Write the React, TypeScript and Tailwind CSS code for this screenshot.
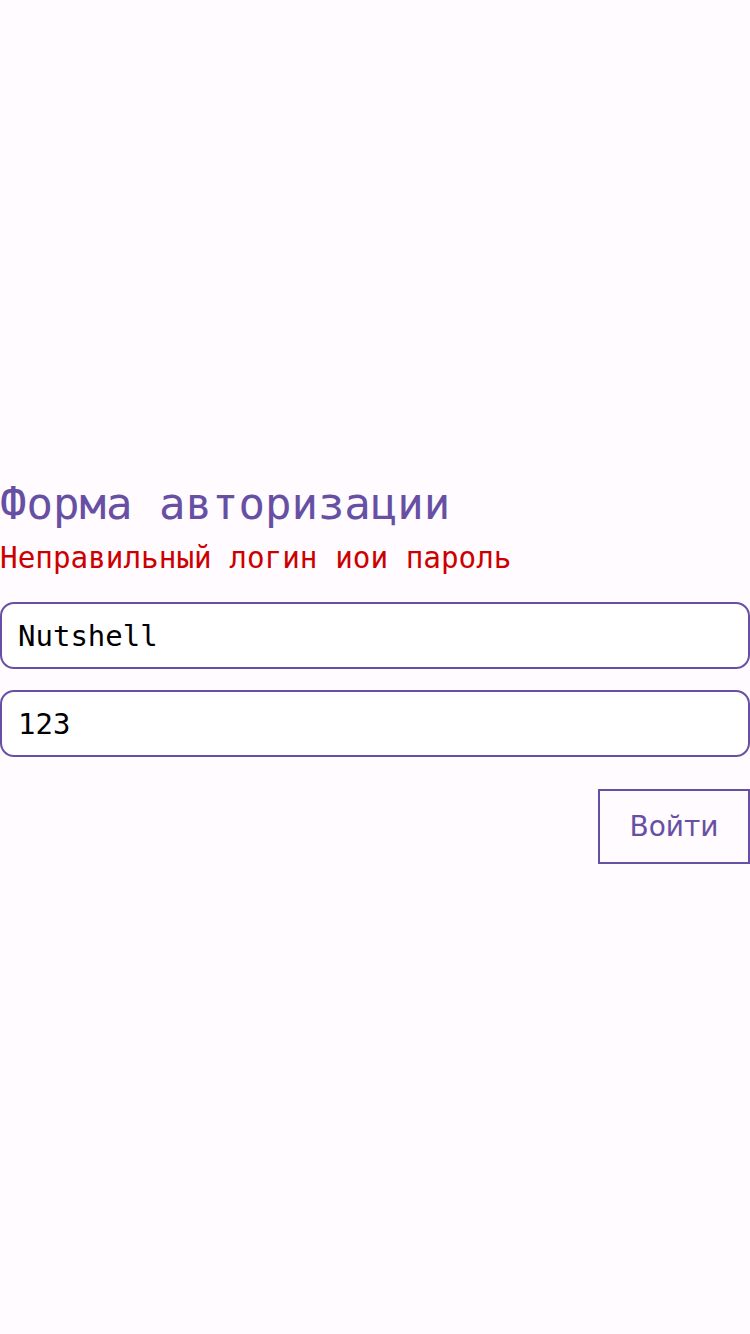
export default function App() {
  return (
    <div className="flex min-h-screen flex-col justify-center bg-[#fffbfe] pt-[8px] font-['DejaVu_Sans_Mono',monospace]">
      <h1 className="text-[44px] leading-[52px] text-[#6750a4]">Форма авторизации</h1>
      <p className="mt-[10px] text-[29.3px] leading-[36px] text-[#cc0000]">Неправильный логин иои пароль</p>
      <form className="mt-[26px] flex flex-col" onSubmit={(e) => e.preventDefault()}>
        <input
          defaultValue="Nutshell"
          className="h-[67px] w-full rounded-[14px] border-2 border-[#6750a4] bg-white px-[16px] text-[29px] text-black outline-none"
        />
        <input
          defaultValue="123"
          className="mt-[21px] h-[67px] w-full rounded-[14px] border-2 border-[#6750a4] bg-white px-[16px] text-[29px] text-black outline-none"
        />
        <div className="mt-[32px] flex justify-end">
          <button
            type="submit"
            className="h-[75px] w-[152px] border-2 border-[#6750a4] font-['DejaVu_Sans',sans-serif] text-[28px] text-[#6750a4]"
          >
            Войти
          </button>
        </div>
      </form>
    </div>
  )
}
